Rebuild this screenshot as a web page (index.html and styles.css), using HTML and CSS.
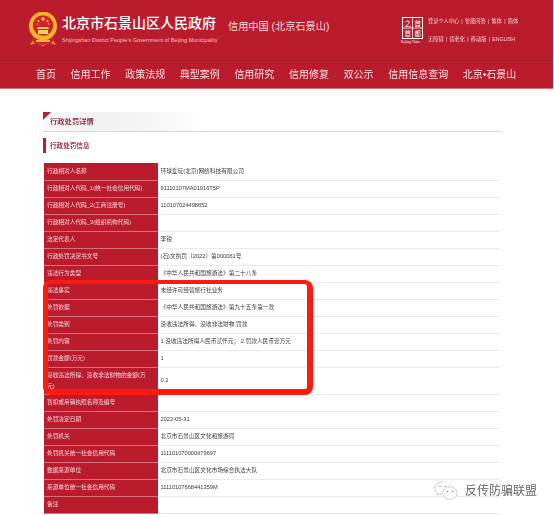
FILE: index.html
```html
<!DOCTYPE html>
<html lang="zh-CN">
<head>
<meta charset="utf-8">
<title>行政处罚详情</title>
<link rel="stylesheet" href="styles.css">
</head>
<body>
<div class="page">
  <header class="top">
    <svg class="emblem" viewBox="0 0 28 36" width="28" height="36" aria-hidden="true">
      <path d="M4 28 L1 33 L7 31 L14 34 L21 31 L27 33 L24 28 Z" fill="#e8a21c"/>
      <ellipse cx="14" cy="14" rx="14" ry="14.5" fill="#f1b52a"/>
      <circle cx="14" cy="13.5" r="10.2" fill="#d3222a"/>
      <circle cx="14" cy="7" r="1.7" fill="#f6cf4a"/>
      <circle cx="9.5" cy="9" r="1" fill="#f6cf4a"/>
      <circle cx="18.5" cy="9" r="1" fill="#f6cf4a"/>
      <circle cx="8.5" cy="12" r=".8" fill="#f6cf4a"/>
      <circle cx="19.5" cy="12" r=".8" fill="#f6cf4a"/>
      <path d="M9 15 H19 L20 17 H8 Z M9 18 H19 V22 H9 Z" fill="#f6d25a"/>
      <path d="M3 24 Q14 35 25 24 L24 30 Q14 36 4 30 Z" fill="#d3222a"/>
      <path d="M7 28 H21 V30 H7 Z" fill="#f1b52a"/>
    </svg>
    <div class="brand">
      <div class="brand-cn">北京市石景山区人民政府</div>
      <div class="brand-en">Shijingshan District People's Government of Beijing Municipality</div>
    </div>
    <div class="slogan">信用中国 (北京石景山)</div>
    <svg class="city-logo" viewBox="0 0 22 27" width="22" height="27" aria-hidden="true">
      <rect x=".5" y=".5" width="20" height="21" fill="none" stroke="#fff"/>
      <path d="M.5 11 H20.5 M10.5 .5 V21.5" stroke="#fff" stroke-width=".8"/>
      <text class="logo-cell" x="2.5" y="8.5">之</text>
      <text class="logo-cell" x="12.5" y="8.5">首</text>
      <text class="logo-cell" x="2.5" y="18.5">首</text>
      <text class="logo-cell" x="12.5" y="18.5">都</text>
      <text class="logo-small" x="-1" y="26">Beijing·China</text>
    </svg>
    <div class="links">
      <div>登录个人中心 | 智能问答 | 繁体 | 简体</div>
      <div>无障碍 | 适老化 | 移动版 | ENGLISH</div>
    </div>
  </header>
  <nav class="nav">
    <a>首页</a><a>信用工作</a><a>政策法规</a><a>典型案例</a><a>信用研究</a><a>信用修复</a><a>双公示</a><a>信用信息查询</a><a>北京•石景山</a>
  </nav>
  <main class="main">
    <div class="crumb">
      <span class="crumb-text">行政处罚详情</span>
    </div>
    <h2 class="sub">行政处罚信息</h2>
    <table class="info">
      <tbody>
        <tr><th>行政相对人名称</th><td>环球爱玩(北京)网络科技有限公司</td></tr>
        <tr><th>行政相对人代码_1(统一社会信用代码)</th><td>91110107MA01916T5P</td></tr>
        <tr><th>行政相对人代码_2(工商注册号)</th><td>110107024498852</td></tr>
        <tr><th>行政相对人代码_3(组织机构代码)</th><td></td></tr>
        <tr><th>法定代表人</th><td>李锐</td></tr>
        <tr><th>行政处罚决定书文号</th><td>(石)文执罚〔2022〕第000061号</td></tr>
        <tr><th>违法行为类型</th><td>《中华人民共和国旅游法》第二十八条</td></tr>
        <tr><th>违法事实</th><td>未经许可经营旅行社业务</td></tr>
        <tr><th>处罚依据</th><td>《中华人民共和国旅游法》第九十五条第一款</td></tr>
        <tr><th>处罚类别</th><td>没收违法所得、没收非法财物,罚款</td></tr>
        <tr><th>处罚内容</th><td>1.没收违法所得人民币贰仟元； 2.罚款人民币壹万元</td></tr>
        <tr><th>罚款金额(万元)</th><td>1</td></tr>
        <tr class="tall"><th>没收违法所得、没收非法财物的金额(万元)</th><td>0.2</td></tr>
        <tr><th>暂扣或吊销执照名称及编号</th><td></td></tr>
        <tr><th>处罚决定日期</th><td>2022-05-31</td></tr>
        <tr><th>处罚机关</th><td>北京市石景山区文化和旅游局</td></tr>
        <tr><th>处罚机关统一社会信用代码</th><td>111101070000679697</td></tr>
        <tr><th>数据来源单位</th><td>北京市石景山区文化市场综合执法大队</td></tr>
        <tr><th>来源单位统一社会信用代码</th><td>11110107668441359M</td></tr>
        <tr><th>备注</th><td></td></tr>
      </tbody>
    </table>
  </main>
</div>
<div class="highlight"></div>
<div class="watermark">
  <svg class="wm-icon" viewBox="0 0 24 20" width="24" height="20" aria-hidden="true">
    <path d="M9 1 C4 1 1 4 1 7.5 C1 9.5 2 11 3.5 12 L3 14 L5.5 13 C6.5 13.3 7 13.4 8 13.4" fill="none" stroke="#999" stroke-width=".8" stroke-dasharray="1.4 1"/>
    <circle cx="6" cy="5.5" r=".8" fill="#999"/>
    <circle cx="11" cy="5.5" r=".8" fill="#999"/>
    <ellipse cx="16" cy="12" rx="7" ry="6.2" fill="#fff" stroke="#999" stroke-width=".8" stroke-dasharray="1.4 1"/>
    <circle cx="13.5" cy="10.5" r=".8" fill="#888"/>
    <circle cx="18.5" cy="10.5" r=".8" fill="#888"/>
  </svg>
  <span class="wm-text">反传防骗联盟</span>
</div>
</body>
</html>
```
FILE: styles.css
```css
* { box-sizing: border-box; }
html, body { margin: 0; padding: 0; }
body {
  position: relative;
  width: 554px;
  height: 515px;
  overflow: hidden;
  background: #fff;
  font-family: "Liberation Sans", "Noto Sans CJK SC", sans-serif;
  color: #333;
}
.page {
  width: 553px;
  filter: blur(0.4px);
}
.top {
  display: flex;
  align-items: flex-start;
  height: 61px;
  background: #ba1b2d;
  border-bottom: 1px solid #a3192a;
  color: #fff;
}
.emblem { margin: 12px 0 0 29px; flex: none; }
.brand { margin: 13px 0 0 5px; width: 166px; flex: none; }
.brand-cn {
  font-size: 14px;
  line-height: 20px;
  font-weight: 500;
  white-space: nowrap;
}
.brand-en {
  font-size: 5.5px;
  line-height: 8px;
  margin-top: 3px;
  color: #f0c4c8;
  white-space: nowrap;
}
.slogan {
  margin-top: 20px;
  font-size: 10.2px;
  line-height: 14px;
  color: #f6dcdf;
  white-space: nowrap;
  width: 174px;
  flex: none;
}
.city-logo { margin-top: 17px; flex: none; overflow: visible; }
.logo-cell { font-size: 6.5px; fill: #fff; }
.logo-small { font-size: 3.3px; fill: #fff; font-family: "Liberation Serif", serif; }
.links {
  margin: 12px 0 0 4px;
  font-size: 5.2px;
  line-height: 18px;
  word-spacing: 0.8px;
  color: #f3d3d6;
  white-space: nowrap;
}
.nav {
  display: flex;
  gap: 14.6px;
  height: 28px;
  padding: 1px 0 0 36px;
  align-items: center;
  background: #ba1b2d;
  border-bottom: 1px solid #e0717c;
  font-size: 10px;
  line-height: 14px;
  color: #f8e3e5;
  white-space: nowrap;
}
.main {
  padding: 23px 53px 0 43px;
}
.crumb {
  position: relative;
  height: 20px;
  border-bottom: 1px solid #f2c6cb;
  background: linear-gradient(90deg, #fafafa 0, #f1f1f1 60px, #f6f6f6 110px, #fff 165px);
  padding: 4px 0 0 7px;
}
.crumb::before {
  content: "";
  position: absolute;
  left: 0;
  top: 0;
  border-style: solid;
  border-width: 8px 8px 0 0;
  border-color: #ba1b2d transparent transparent transparent;
}
.crumb-text {
  display: block;
  font-size: 7.3px;
  line-height: 12px;
  font-weight: 700;
  color: #8f3442;
}
.sub {
  margin: 6px 0 10px;
  height: 15px;
  border-left: 3px solid #ba1b2d;
  padding-left: 4px;
  font-size: 6.6px;
  line-height: 15px;
  font-weight: 700;
  color: #a53444;
}
.info {
  width: 456px;
  margin-left: 1px;
  border-collapse: collapse;
  table-layout: fixed;
  font-size: 5.7px;
}
.info tr { height: 17px; }
.info tr.tall { height: 27px; }
.info th {
  width: 113.5px;
  padding: 0 9px 0 3px;
  background: #ba1b2d;
  border-bottom: 1px solid #d9707b;
  color: #f5d9dc;
  font-weight: 400;
  text-align: left;
  line-height: 11px;
  vertical-align: middle;
}
.info td {
  padding: 0 3px;
  border-bottom: 1px solid #ebebeb;
  color: #3a3a3a;
  line-height: 11px;
  vertical-align: middle;
}
.highlight {
  position: absolute;
  left: 43px;
  top: 280px;
  width: 270px;
  height: 115px;
  border-style: solid;
  border-color: #ff1a0e;
  border-width: 4px 6px 6px 5px;
  border-radius: 8px;
}
.watermark {
  position: absolute;
  left: 434px;
  top: 481px;
  display: flex;
  align-items: center;
  gap: 7px;
}
.wm-icon { flex: none; }
.wm-text {
  font-size: 12px;
  line-height: 18px;
  color: #666;
  white-space: nowrap;
  text-shadow: 0 0 1px #fff;
}
```
